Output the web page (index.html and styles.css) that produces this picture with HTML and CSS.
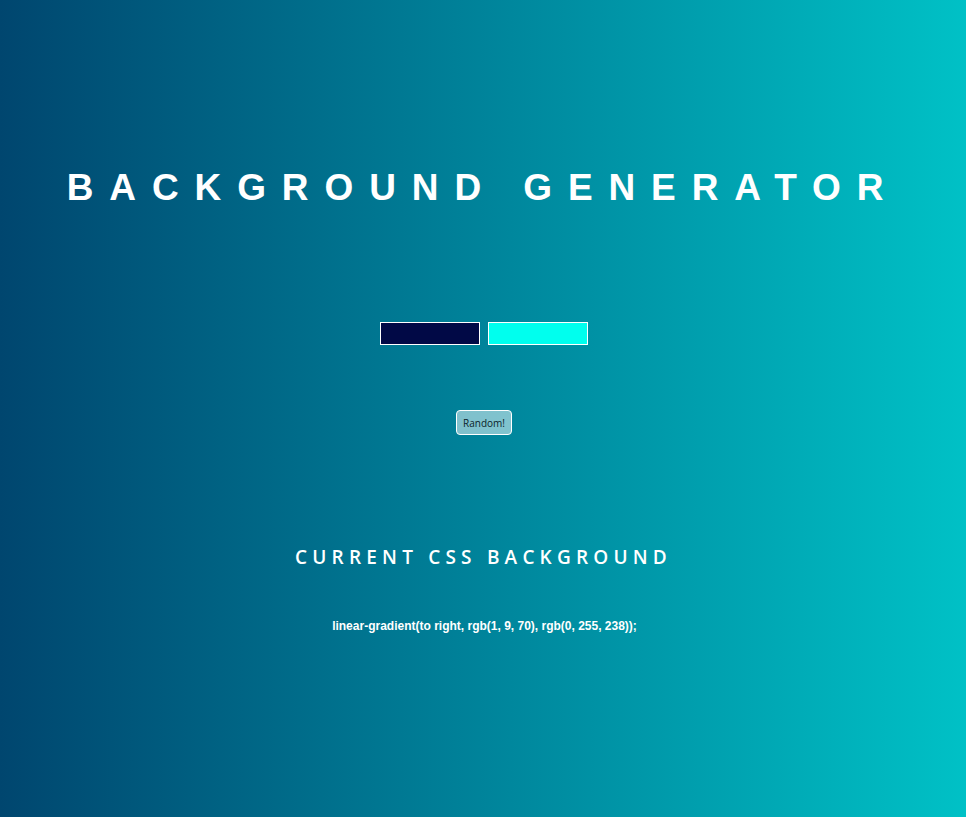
FILE: index.html
```html
<!DOCTYPE html>
<html>
<head>
<meta charset="utf-8">
<title>Background Generator</title>
<link rel="stylesheet" href="styles.css">
</head>
<body class="page">
  <h1 class="title">BACKGROUND GENERATOR</h1>
  <div class="pickers">
    <span class="swatch swatch-dark"></span>
    <span class="swatch swatch-cyan"></span>
  </div>
  <div class="actions">
    <button class="random-btn">Random!</button>
  </div>
  <h3 class="subtitle">CURRENT CSS BACKGROUND</h3>
  <p class="css-output">linear-gradient(to right, rgb(1, 9, 70), rgb(0, 255, 238));</p>
</body>
</html>
```
FILE: styles.css
```css
html, body {
  margin: 0;
  padding: 0;
  height: 100%;
}
.page {
  min-height: 817px;
  background: linear-gradient(to right, #00466f, #00c1c6);
  color: #ffffff;
  text-align: center;
  display: flex;
  flex-direction: column;
  align-items: center;
}
.title {
  margin: 166px 0 0 0;
  font-family: "Liberation Sans", Arial, sans-serif;
  font-weight: 700;
  font-size: 37px;
  line-height: 44px;
  letter-spacing: 15.9px;
  padding-left: 0;
}
.pickers {
  margin-top: 112px;
  padding-left: 2px;
  display: flex;
  gap: 8px;
}
.swatch {
  display: block;
  width: 98px;
  height: 21px;
  border: 1px solid #ffffff;
}
.swatch-dark { background: #010946; }
.swatch-cyan { background: #00ffee; }
.actions {
  margin-top: 65px;
  padding-left: 2px;
}
.random-btn {
  width: 56px;
  height: 25px;
  padding: 0;
  border: 1px solid #ffffff;
  border-radius: 4px;
  background: rgba(255, 255, 255, 0.5);
  color: #0a1f2a;
  font-family: "Open Sans", "Noto Sans", sans-serif;
  font-size: 10px;
}
.subtitle {
  margin: 109px 0 0 0;
  font-family: "Open Sans", "Noto Sans", sans-serif;
  font-weight: 600;
  font-size: 19px;
  line-height: 26px;
  letter-spacing: 5.2px;
  padding-left: 1px;
}
.css-output {
  margin: 49px 0 0 0;
  padding-left: 3px;
  font-family: "Liberation Sans", Arial, sans-serif;
  font-weight: 700;
  font-size: 12px;
  line-height: 14px;
}
```
